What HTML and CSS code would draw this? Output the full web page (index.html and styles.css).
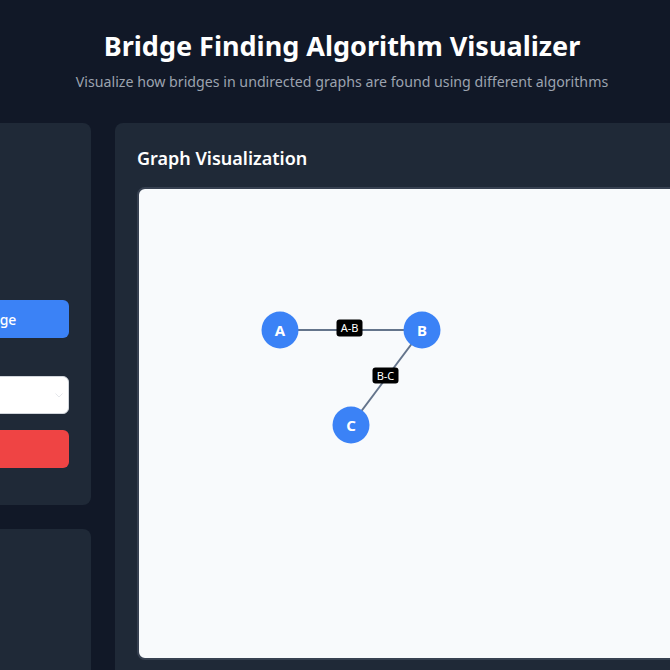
FILE: index.html
```html
<!DOCTYPE html>
<html lang="en">
<head>
<meta charset="utf-8">
<title>Bridge Finding Algorithm Visualizer</title>
<link rel="stylesheet" href="styles.css">
</head>
<body>
<header class="page-header">
  <h1 class="title">Bridge Finding Algorithm Visualizer</h1>
  <p class="subtitle">Visualize how bridges in undirected graphs are found using different algorithms</p>
</header>
<main class="layout">
  <aside class="sidebar">
    <section class="card controls">
      <h2 class="card-title">Controls</h2>
      <div class="field">
        <label class="field-label">Nodes</label>
        <div class="input-row">
          <span class="chip">A</span>
          <span class="chip">B</span>
          <span class="chip">C</span>
        </div>
      </div>
      <button class="btn btn-blue">Remove Selected Edge</button>
      <div class="field field-algo">
        <label class="field-label">Algorithm</label>
        <div class="select">
          <span>Tarjan</span>
          <svg class="chevron" width="8" height="5" viewBox="0 0 8 5"><path d="M0.5 0.5l3.5 3.5 3.5-3.5" fill="none" stroke="#e5e7eb" stroke-width="1"/></svg>
        </div>
      </div>
      <button class="btn btn-red">Clear Graph</button>
    </section>
    <section class="card info">
      <h2 class="card-title">Steps</h2>
    </section>
  </aside>
  <section class="card viz">
    <h2 class="card-title">Graph Visualization</h2>
    <div class="canvas">
      <svg class="graph" width="760" height="469" viewBox="0 0 760 469">
        <line x1="141" y1="141" x2="283" y2="141" class="edge"/>
        <line x1="283" y1="141" x2="212" y2="236" class="edge"/>
        <rect x="197.5" y="130.5" width="26" height="17" rx="3" class="edge-tag"/>
        <text x="210.5" y="143" class="edge-text">A-B</text>
        <rect x="233.5" y="178.5" width="26" height="16" rx="3" class="edge-tag"/>
        <text x="246.5" y="190.5" class="edge-text">B-C</text>
        <circle cx="141" cy="141" r="18.5" class="node"/>
        <text x="141" y="146.5" class="node-text">A</text>
        <circle cx="283" cy="141" r="18.5" class="node"/>
        <text x="283" y="146.5" class="node-text">B</text>
        <circle cx="212" cy="236" r="18.5" class="node"/>
        <text x="212" y="241.5" class="node-text">C</text>
      </svg>
    </div>
  </section>
</main>
</body>
</html>
```
FILE: styles.css
```css
* { box-sizing: border-box; }
html, body { margin: 0; padding: 0; }
body {
  background: #111827;
  color: #f9fafb;
  font-family: "Noto Sans", "Open Sans", sans-serif;
  overflow: hidden;
}
.page-header {
  text-align: center;
  padding: 26px 0 0 14px;
  height: 123px;
}
.title {
  margin: 0;
  font-size: 27px;
  font-weight: 700;
  line-height: 40px;
  color: #ffffff;
}
.subtitle {
  margin: 5px 0 0;
  font-size: 14.2px;
  line-height: 22px;
  color: #9ca3af;
}
.layout {
  display: flex;
  justify-content: center;
  gap: 24px;
  align-items: flex-start;
}
.sidebar {
  flex: none;
  width: 300px;
  display: flex;
  flex-direction: column;
  gap: 24px;
}
.card {
  background: #1f2937;
  border-radius: 8px;
  padding: 22px;
}
.card-title {
  margin: 0;
  font-size: 18px;
  font-weight: 600;
  line-height: 27px;
  color: #ffffff;
}
.controls { height: 382px; }
.controls .card-title { margin-bottom: 18px; }
.field-label {
  display: block;
  font-size: 14px;
  line-height: 20px;
  color: #d1d5db;
}
.input-row {
  display: flex;
  gap: 8px;
  margin-top: 8px;
  height: 64px;
}
.chip {
  display: inline-block;
  height: 24px;
  padding: 2px 8px;
  border-radius: 4px;
  background: #374151;
  color: #e5e7eb;
  font-size: 13px;
}
.btn {
  display: block;
  width: 100%;
  height: 38px;
  border: none;
  border-radius: 6px;
  color: #ffffff;
  font-family: inherit;
  font-size: 14px;
  font-weight: 500;
}
.btn-blue { background: #3b82f6; margin-top: 18px; }
.btn-red { background: #ef4444; margin-top: 16px; }
.field-algo { margin-top: 16px; }
.select {
  display: flex;
  align-items: center;
  justify-content: space-between;
  height: 38px;
  margin-top: 2px;
  padding: 0 5px 0 12px;
  background: #ffffff;
  border: 1px solid #d1d5db;
  border-radius: 6px;
  color: #111827;
  font-size: 14px;
}
.info { height: 300px; }
.viz {
  flex: none;
  width: 764px;
  height: 600px;
}
.canvas {
  margin-top: 15px;
  height: 473px;
  background: #f8fafc;
  border: 2px solid #374151;
  border-radius: 8px;
  overflow: hidden;
}
.graph { display: block; }
.edge { stroke: #64748b; stroke-width: 2; }
.edge-tag { fill: #000000; }
.edge-text {
  fill: #ffffff;
  font-size: 11px;
  text-anchor: middle;
  font-family: "Noto Sans", sans-serif;
}
.node { fill: #3b82f6; }
.node-text {
  fill: #ffffff;
  font-size: 15px;
  font-weight: 700;
  text-anchor: middle;
  font-family: "Noto Sans", sans-serif;
}
```
